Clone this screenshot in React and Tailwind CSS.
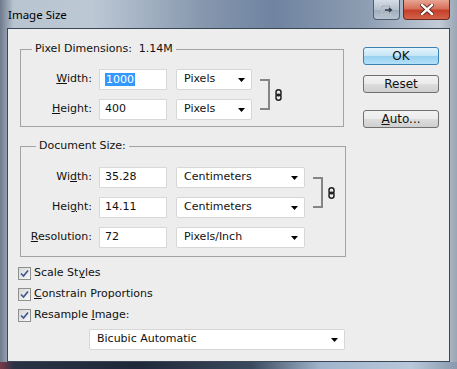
import React from "react";

const Arrow = () => (
  <svg width="7" height="4" viewBox="0 0 7 4" className="shrink-0">
    <polygon points="0,0 7,0 3.5,4" fill="#000" />
  </svg>
);

const Chain = () => (
  <svg width="7" height="12" viewBox="0 0 7 12" className="shrink-0">
    <rect x="1" y="0.8" width="5" height="6" rx="2.5" fill="none" stroke="#222" strokeWidth="1.5" />
    <rect x="1" y="5.2" width="5" height="6" rx="2.5" fill="none" stroke="#222" strokeWidth="1.5" />
  </svg>
);

const Dropdown = ({ label, w }) => (
  <div
    className={`${w} h-[21px] flex items-center justify-between pl-[7px] pr-[6px] bg-white border border-[#d7d7d7] rounded-[2px]`}
  >
    <span>{label}</span>
    <Arrow />
  </div>
);

const Field = ({ children }) => (
  <div className="w-[68px] h-[21px] flex items-center pl-[5px] bg-white border border-[#d9d9d9]">
    {children}
  </div>
);

const Row = ({ label, value, unit, unitW }) => (
  <div className="flex items-center h-[21px]">
    <div className="w-[72px] text-right pr-[1px]">{label}</div>
    <div className="ml-[6px]">
      <Field>{value}</Field>
    </div>
    <div className="ml-[9px]">
      <Dropdown label={unit} w={unitW} />
    </div>
  </div>
);

const Bracket = () => (
  <div className="flex items-center ml-[8px]">
    <div className="w-[10px] h-[31px] border-t-2 border-r-2 border-b-2 border-[#858585]" />
    <div className="ml-[5px]">
      <Chain />
    </div>
  </div>
);

const Check = ({ children }) => (
  <div className="flex items-center h-[13px]">
    <div className="w-[13px] h-[13px] border border-[#8e8f8f] bg-[linear-gradient(135deg,#d8d8d8,#f8f8f8)] flex items-center justify-center">
      <svg width="9" height="9" viewBox="0 0 9 9">
        <path d="M1 4.5 L3.5 7 L8 1.5" fill="none" stroke="#3f5a8f" strokeWidth="1.7" />
      </svg>
    </div>
    <span className="ml-[3px]">{children}</span>
  </div>
);

const Button = ({ children, primary }) => (
  <div
    className={`w-[76px] h-[18px] flex items-center justify-center rounded-[3px] border ${
      primary
        ? "border-[#3c7fb1] bg-[linear-gradient(#e5f4fc,#c4e5f6_50%,#98d1ef_51%,#b3e0f9)]"
        : "border-[#707070] bg-[linear-gradient(#f2f2f2,#ebebeb_50%,#dddddd_51%,#cfcfcf)]"
    }`}
  >
    {children}
  </div>
);

export default function App() {
  return (
    <div className="w-[457px] h-[369px] flex flex-col overflow-hidden bg-[linear-gradient(90deg,#6e7a8c_0%,#b9c4d1_3%,#bdc8d5_20%,#8596ad_45%,#6f84a0_60%,#8d9db2_80%,#c3ccd8_96%,#9aa6b5_100%)] font-['DejaVu_Sans',sans-serif] text-[11px] text-[#111]">
      {/* title bar */}
      <div className="h-[28px] flex items-start pl-[8px] pr-[7px] shrink-0">
        <span className="mt-[6px] text-[11.5px] font-['Noto_Sans',sans-serif] text-black">
          Image Size
        </span>
        <div className="ml-auto flex gap-[3px]">
          <div className="w-[27px] h-[20px] rounded-b-[4px] border border-t-0 border-[#505d6d] bg-[linear-gradient(#d6dde6,#b5c1cf_50%,#9eacbd_51%,#b8c4d2)] flex items-center justify-center">
            <svg width="12" height="10" viewBox="0 0 12 10">
              <rect x="1" y="1" width="8" height="8" fill="none" stroke="#fff" strokeWidth="1.5" />
              <rect x="1" y="1" width="8" height="8" fill="none" stroke="#3a4656" strokeWidth="0.6" />
              <path d="M4 5 H10 M8 3 L10.5 5 L8 7" fill="none" stroke="#2e3a48" strokeWidth="1.3" />
            </svg>
          </div>
          <div className="w-[47px] h-[20px] rounded-b-[4px] border border-t-0 border-[#6b2b22] bg-[linear-gradient(#e8a593,#d7705a_45%,#c4402a_55%,#d4624a)] flex items-center justify-center">
            <svg width="14" height="11" viewBox="0 0 14 11">
              <path d="M2 1 L12 10 M12 1 L2 10" stroke="#4a1a14" strokeWidth="4" strokeLinecap="square" />
              <path d="M2 1 L12 10 M12 1 L2 10" stroke="#fff" strokeWidth="2.4" strokeLinecap="square" />
            </svg>
          </div>
        </div>
      </div>

      {/* client area */}
      <div className="mx-[7px] flex-1 border border-[#3b4756] bg-[#ededed] flex">
        <div className="pl-[10px] flex flex-col">
          <fieldset className="ml-[2px] mt-[13px] w-[324px] border border-[#a3a3a3] pt-[13px] pb-[6px]">
            <legend className="ml-[11px] px-[3px] leading-[14px] whitespace-pre">
              Pixel Dimensions:  1.14M
            </legend>
            <div className="flex items-center">
              <div className="flex flex-col gap-[9px]">
                <Row
                  label={<><span className="underline">W</span>idth:</>}
                  value={<span className="bg-[#3399ff] text-white px-[1px] leading-[13px]">1000</span>}
                  unit="Pixels"
                  unitW="w-[76px]"
                />
                <Row
                  label={<><span className="underline">H</span>eight:</>}
                  value="400"
                  unit="Pixels"
                  unitW="w-[76px]"
                />
              </div>
              <Bracket />
            </div>
          </fieldset>

          <fieldset className="ml-[2px] mt-[12px] w-[326px] border border-[#a3a3a3] pt-[14px] pb-[8px]">
            <legend className="ml-[15px] px-[3px] leading-[14px]">Document Size:</legend>
            <div className="flex flex-col gap-[9px]">
              <div className="flex items-center">
                <div className="flex flex-col gap-[9px]">
                  <Row
                    label={<>Wi<span className="underline">d</span>th:</>}
                    value="35.28"
                    unit="Centimeters"
                    unitW="w-[129px]"
                  />
                  <Row
                    label={<>Hei<span className="underline">g</span>ht:</>}
                    value="14.11"
                    unit="Centimeters"
                    unitW="w-[129px]"
                  />
                </div>
                <Bracket />
              </div>
              <Row
                label={<><span className="underline">R</span>esolution:</>}
                value="72"
                unit="Pixels/Inch"
                unitW="w-[129px]"
              />
            </div>
          </fieldset>

          <div className="mt-[10px] flex flex-col gap-[8px]">
            <Check>
              Scale St<span className="underline">y</span>les
            </Check>
            <Check>
              <span className="underline">C</span>onstrain Proportions
            </Check>
            <Check>
              Resample <span className="underline">I</span>mage:
            </Check>
          </div>

          <div className="mt-[7px] ml-[71px]">
            <Dropdown label="Bicubic Automatic" w="w-[256px]" />
          </div>
        </div>

        <div className="ml-auto mr-[10px] mt-[18px] flex flex-col text-[12px]">
          <Button primary>OK</Button>
          <div className="mt-[10px]">
            <Button>Reset</Button>
          </div>
          <div className="mt-[17px]">
            <Button>
              <span>
                <span className="underline">A</span>uto...
              </span>
            </Button>
          </div>
        </div>
      </div>

      {/* bottom frame edge */}
      <div className="h-[7px] shrink-0 bg-[linear-gradient(90deg,#7a3a48_0%,#2a3344_3%,#1e2838_30%,#3a4a5e_55%,#9fb4cc_70%,#b8c8da_90%,#8a9aae_100%)]" />
    </div>
  );
}
